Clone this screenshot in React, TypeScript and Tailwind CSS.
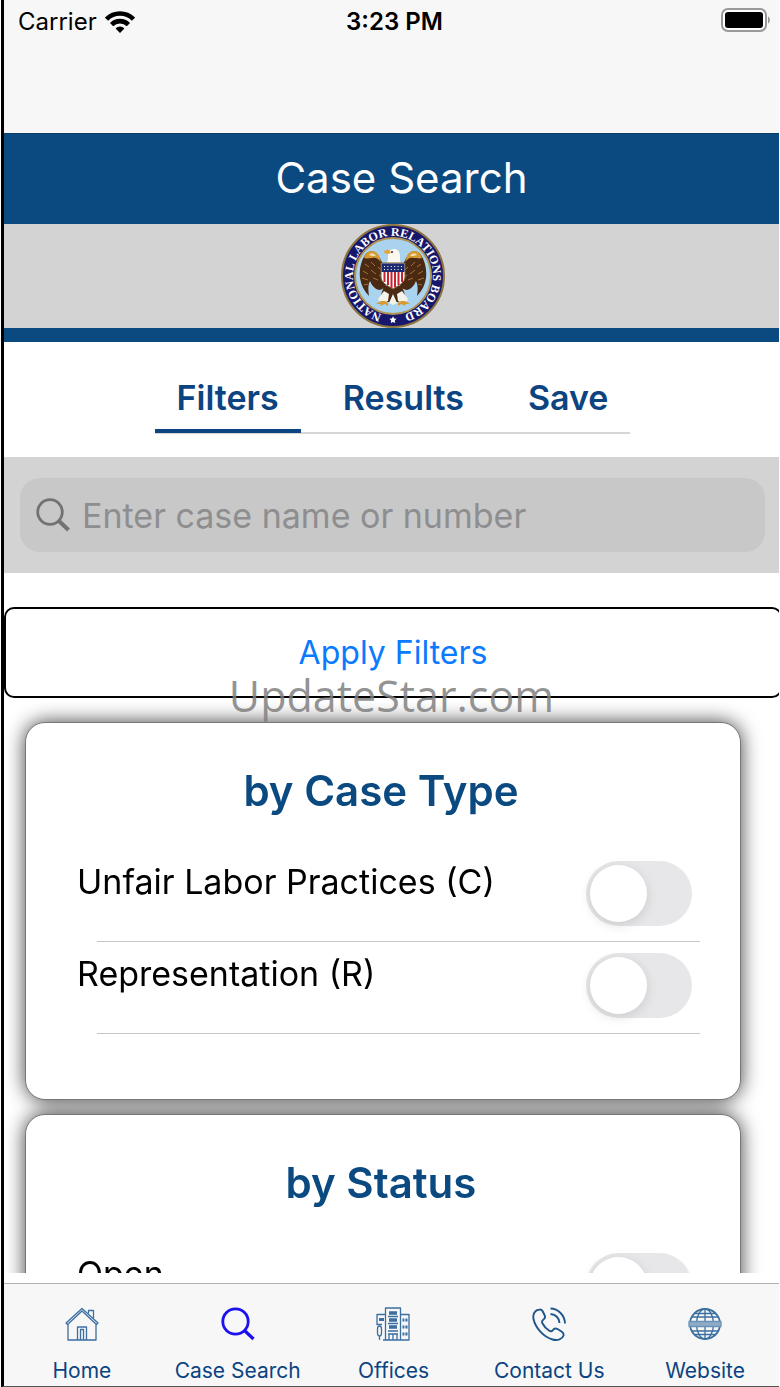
import { useState } from "react";
import type { ReactNode } from "react";

const tabs = ["Filters", "Results", "Save"];

const groups = [
  { title: "by Case Type", options: ["Unfair Labor Practices (C)", "Representation (R)"] },
  { title: "by Status", options: ["Open"] },
];

function WifiIcon() {
  return (
    <svg width="30" height="22" viewBox="0 0 30 22" aria-hidden="true">
      <g fill="none" stroke="#000" strokeWidth="4.6">
        <path d="M1.5 8.2a19 19 0 0 1 27 0" />
        <path d="M6.6 13.6a12 12 0 0 1 16.8 0" />
      </g>
      <path d="M15 22l-4.4-4.6a6.2 6.2 0 0 1 8.8 0z" fill="#000" />
    </svg>
  );
}

function BatteryIcon() {
  return (
    <svg width="50" height="24" viewBox="0 0 50 24" aria-hidden="true">
      <rect x="1" y="1" width="44" height="22" rx="6" fill="#fff" stroke="#999" strokeWidth="2" />
      <rect x="4" y="4" width="38" height="16" rx="3" fill="#000" />
      <path d="M47 8.5c2.6 1 2.6 6 0 7z" fill="#999" />
    </svg>
  );
}

function Wing() {
  return (
    <g>
      <path
        d="M46 50C43 43 41 37 37 31c-3-5-10-5-13 0-4 6-6 14-5 23 1 7 4 13 9 18-1-6-1-11 1-15 2 5 5 8 9 9 3 0 6-3 8-6z"
        fill="#4a2a12"
      />
      <path d="M23 34c2-9 12-9 15-2l2 6c-3-4-6-5-9-4-3 0-5 1-8 0z" fill="#d79a33" />
      <path d="M28 31c2-2 5-2 7 1-2 0-5 0-7-1z" fill="#f3dfae" />
      <path
        d="M24 40l4 3M22 47l5 3M21 54l6 2M23 61l4-1M30 38l4 4M30 46l5 4M32 54l5 2M37 43l4 4M38 51l4 3"
        stroke="#a5713a"
        strokeWidth="1"
      />
    </g>
  );
}

function Seal() {
  return (
    <svg className="size-[104px]" viewBox="0 0 104 104" role="img" aria-label="National Labor Relations Board">
      <circle cx="52" cy="52" r="51" fill="#17176b" stroke="#8c7440" strokeWidth="2" />
      <circle cx="52" cy="52" r="38" fill="#a9d3ef" stroke="#b09452" strokeWidth="2" />
      <path id="ring" d="M46 91.5A40 40 0 1 1 58 91.5" fill="none" />
      <text fill="#fff" fontSize="12" fontWeight="700" fontFamily="'Liberation Serif', serif" textAnchor="middle">
        <textPath href="#ring" startOffset="50%">
          NATIONAL LABOR RELATIONS BOARD
        </textPath>
      </text>
      <path d="M52 92.2l1.1 2.3 2.5.3-1.8 1.8.4 2.5-2.2-1.2-2.2 1.2.4-2.5-1.8-1.8 2.5-.3z" fill="#fff" />
      <Wing />
      <g transform="translate(104 0) scale(-1 1)">
        <Wing />
      </g>
      <path d="M43 62h18l3 9-6 7H46l-6-7z" fill="#4a2a12" />
      <path d="M43 67l-6 8 3 5 7-3 1-7zM61 67l6 8-3 5-7-3-1-7zM52 70l-4 9 4 2 4-2z" fill="#f5f2ea" />
      <path d="M40 77l-5 3h5l-1 2 5-2 3 2v-3l-3-2zM64 77l5 3h-5l1 2-5-2-3 2v-3l3-2z" fill="#d79a33" />
      <path d="M44 41c3-3 3-6 3-9 0-5 3-7 6-7 5 0 6 4 6 8 0 3 0 6 2 8l-5-1-4 2-4-2z" fill="#fbf8ef" />
      <path d="M48 26c-3-1-5 0-5 3l4 1 3-1z" fill="#e2a63c" />
      <circle cx="51" cy="28" r="1" fill="#2b2b2b" />
      <path d="M40 39h24v14c0 5-5 8-12 12-7-4-12-7-12-12z" fill="#fff" stroke="#7d5a2c" strokeWidth="1" />
      <path d="M43.5 47v11M47 47v14M50.5 47v17M54 47v16.5M57.5 47v14M61 47v11" stroke="#c5232f" strokeWidth="2" />
      <path d="M40.5 39.5h23V48h-23z" fill="#1d2a70" />
      <path d="M43 42.5h18M43 45.5h18" stroke="#fff" strokeWidth="1" strokeDasharray="1 2.4" />
    </svg>
  );
}

function NavIcon({ children, color = "#3a6f9f" }: { children: ReactNode; color?: string }) {
  return (
    <svg
      className="size-[34px]"
      viewBox="0 0 34 34"
      fill="none"
      stroke={color}
      strokeWidth="1.3"
      strokeLinejoin="round"
      aria-hidden="true"
    >
      {children}
    </svg>
  );
}

const navItems = [
  {
    label: "Home",
    icon: (
      <NavIcon>
        <path d="M3 33V16.5M31 33V16.5M2.5 33h29M1 16L17 1.5 33 16l-1.5 1.5L17 4 2.5 17.5z" />
        <path d="M12.5 33V20h9v13M15.5 33V22.5h3V33M23.5 6.5v-3h5v8" />
      </NavIcon>
    ),
  },
  {
    label: "Case Search",
    icon: (
      <NavIcon color="#1a10f0">
        <circle cx="14.5" cy="14.5" r="12.7" strokeWidth="2.8" />
        <path d="M23.5 23.5l9 8.5" strokeWidth="3.2" />
      </NavIcon>
    ),
  },
  {
    label: "Offices",
    icon: (
      <NavIcon>
        <path d="M9.5 33V1h15v32M24.5 7.5H33V33H7M9.5 7.5H1v10h5" />
        <path d="M3.5 33v-4M1.5 22c0-4 4-4 4 0v4c0 4-4 4-4 0z" />
        <path d="M13 6h8M13 13h8M13 20h8" strokeWidth="3.6" />
        <path d="M12 9.5h10M12 16.5h10M12 24h10M12 27h10M13 33v-6M17 33v-6M21 33v-6" />
        <path d="M26.5 13h5M26.5 20h5M26.5 27h5M3 12.5h5" strokeWidth="3.2" />
        <path d="M28.9 10v20" stroke="#f7f7f7" strokeWidth="1" />
      </NavIcon>
    ),
  },
  {
    label: "Contact Us",
    icon: (
      <NavIcon color="#1d568c">
        <path
          d="M7.5 2.5C3 3 .5 7 1.5 12c2 9 10 18 19 20.5 5 1.5 10-.5 11-4 .5-2-.5-3-2-4l-4-2.5c-2-1-3.5-.5-4.5 1-1 1.5-2.5 1.5-4 .5-3-2-5-4-6.5-7-.8-1.5-.5-3 1-4 1.5-1 2-2.5 1-4.5L10.500 4c-.8-1.3-1.7-1.7-3-1.5z"
          strokeWidth="1.9"
        />
        <path d="M18.5 1.5c7.5 0 14.5 7 14.5 15M18.5 7c5 .5 8.5 4 9 9" strokeWidth="1.9" />
      </NavIcon>
    ),
  },
  {
    label: "Website",
    icon: (
      <NavIcon>
        <circle cx="17" cy="17" r="15" strokeWidth="1.8" />
        <ellipse cx="17" cy="17" rx="8.5" ry="15" />
        <path d="M17 2v30M3.5 10h27M6 6.5h22M3.5 24h27M6 27.5h22" />
        <path d="M1 14.5h32v5H1z" fill="#8fabc7" stroke="#6b93b8" />
      </NavIcon>
    ),
  },
];

export default function App() {
  const [tab, setTab] = useState("Filters");

  return (
    <div className="bg-white px-px font-['Inter',sans-serif] text-black">
      <div className="relative flex h-screen flex-col overflow-hidden border-b border-l-[3px] border-b-[#555] border-l-black">
        <div className="grid h-[133px] shrink-0 grid-cols-3 items-start bg-[#f7f7f7] pt-2 pr-2 pl-[14px]">
          <div className="flex h-7 items-center gap-2 text-[24px]">
            Carrier
            <WifiIcon />
          </div>
          <div className="h-7 text-center text-[24px] leading-7 font-semibold">3:23 PM</div>
          <div className="flex justify-end">
            <BatteryIcon />
          </div>
        </div>

        <header className="shrink-0">
          <h1 className="h-[91px] border-t border-[#0a3c68] bg-[#0b4a80] pl-5 text-center text-[42px] leading-[88px] text-white">
            Case Search
          </h1>
          <div className="flex justify-center border-b-[14px] border-[#0b4a80] bg-[#d3d3d3] pl-[2px]">
            <Seal />
          </div>
        </header>

        <nav className="flex h-[115px] shrink-0 justify-center pt-6 pl-[2px]">
          <div className="flex h-[68px] gap-5 border-b-2 border-[#d6d6d6]">
            {tabs.map((name) => (
              <button
                key={name}
                type="button"
                onClick={() => setTab(name)}
                className={`h-[67px] px-[22px] text-[34px] font-semibold text-[#0b4480] ${
                  tab === name ? "border-b-4 border-[#0b4480]" : "border-b-4 border-transparent"
                }`}
              >
                {name}
              </button>
            ))}
          </div>
        </nav>

        <div className="shrink-0 bg-[#d3d3d3] py-[21px] pr-[14px] pl-4">
          <label className="flex h-[74px] items-center gap-3 rounded-[20px] bg-[#c8c8c8] px-4">
            <svg className="size-[34px] shrink-0" viewBox="0 0 34 34" fill="none" stroke="#727272" aria-hidden="true">
              <circle cx="14" cy="14" r="12.3" strokeWidth="2.8" />
              <path d="M23 23l9.5 9" strokeWidth="4" />
            </svg>
            <input
              type="search"
              aria-label="Case name or number"
              placeholder="Enter case name or number"
              className="w-full bg-transparent text-[34px] outline-none placeholder:text-[#8e8e90]"
            />
          </label>
        </div>

        <main className="min-h-0 flex-1 overflow-hidden pt-[34px]">
          <button
            type="button"
            className="relative z-10 h-[91px] w-[calc(100%+3px)] rounded-[10px] border-2 border-black bg-white text-[32px] text-[#0a7aff]"
          >
            Apply Filters
          </button>

          <div className="mt-6 mr-[38px] ml-[21px] flex flex-col gap-[14px] drop-shadow-[0_0_10px_rgba(0,0,0,0.75)]">
            {groups.map((group) => (
              <section key={group.title} className="rounded-[20px] border border-[#777] bg-white pt-10 pb-16">
                <h2 className="pr-1 text-center text-[42px] leading-[56px] font-semibold text-[#0b4a80]">{group.title}</h2>
                <div className="mt-8">
                  {group.options.map((option) => (
                    <label key={option} className="block h-[92px] pt-[10px] pr-10 pl-[51px]">
                      <span className="flex h-20 justify-between pr-2">
                        <span className="text-[34px] leading-[42px]">{option}</span>
                        <input
                          type="checkbox"
                          role="switch"
                          className="relative h-[65px] w-[106px] appearance-none rounded-full bg-[#e7e7e9] before:absolute before:top-1 before:left-1 before:size-[57px] before:rounded-full before:bg-white before:shadow-[0_3px_12px_rgba(0,0,0,0.12)] checked:bg-[#34c759] checked:before:left-[45px]"
                        />
                      </span>
                      <span className="ml-5 block h-px bg-[#c6c6c8]" />
                    </label>
                  ))}
                </div>
              </section>
            ))}
          </div>
        </main>

        <nav className="mt-[10px] -mr-1 grid h-[103px] shrink-0 grid-cols-5 border-t border-[#b2b2b2] bg-[#f7f7f7] pt-[23px]">
          {navItems.map((item) => (
            <a key={item.label} href="#" className="flex flex-col items-center gap-4 text-[21px] text-[#0b4480]">
              {item.icon}
              <span className="leading-7">{item.label}</span>
            </a>
          ))}
        </nav>

        {/* watermark */}
        <div className="pointer-events-none absolute inset-x-0 top-[666px] z-20 text-center font-['Open_Sans',sans-serif] text-[43px] leading-[60px] text-[#808080]/85">
          UpdateStar.com
        </div>
      </div>
    </div>
  );
}
